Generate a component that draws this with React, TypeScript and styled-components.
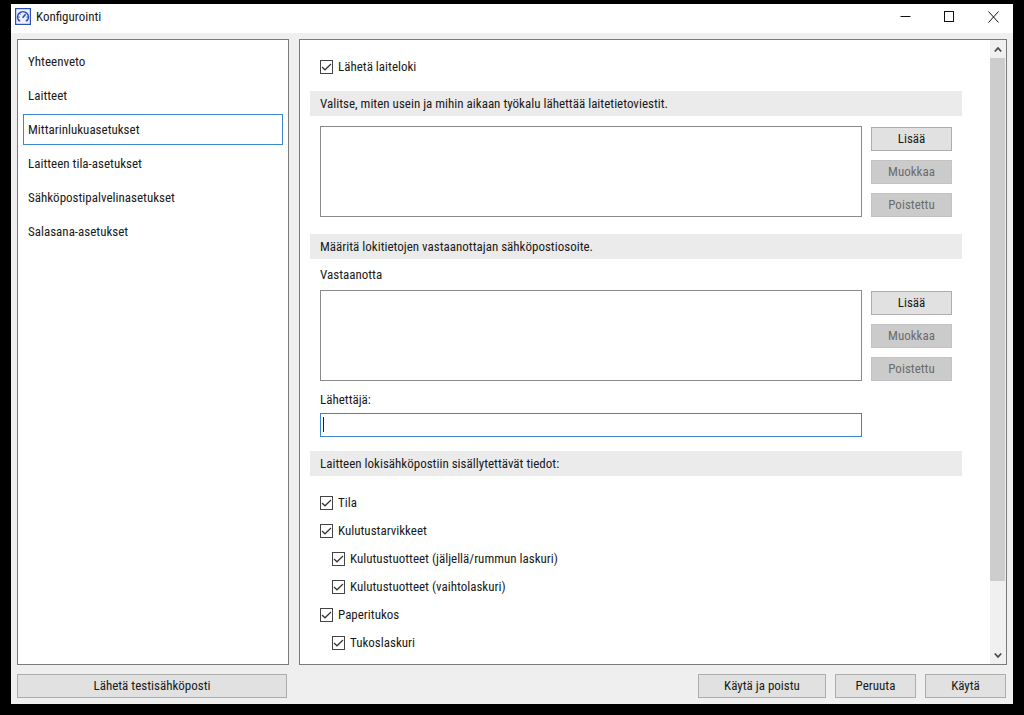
import React from "react";
import styled, { createGlobalStyle } from "styled-components";

const GlobalStyle = createGlobalStyle`
  *, *::before, *::after { box-sizing: border-box; }
  body {
    margin: 0;
    background: #000;
    color: #1a1a1a;
    font: 13px/16px "Roboto Condensed", Roboto, sans-serif;
  }
  button, input, select { font: inherit; color: inherit; margin: 0; }
`;

const Desktop = styled.div`
  display: flex;
  min-height: 100vh;
  padding: 4px 11px 11px;
`;

const Window = styled.main`
  flex: 1;
  display: flex;
  flex-direction: column;
  min-width: 0;
  background: #efefef;
`;

const TitleBar = styled.header`
  display: flex;
  align-items: center;
  gap: 5px;
  height: 29px;
  padding: 0 0 4px 4px;
  background: #fff;
`;

const Title = styled.h1`
  flex: 1;
  margin: 0;
  font-size: 13px;
  font-weight: 400;
`;

const CaptionButton = styled.button`
  display: flex;
  align-items: center;
  justify-content: center;
  width: 39px;
  height: 25px;
  padding: 0;
  border: 0;
  background: none;
`;

const Columns = styled.div`
  flex: 1;
  display: flex;
  gap: 10px;
  padding: 6px 6px 0;
`;

const Sidebar = styled.nav`
  display: flex;
  flex-direction: column;
  gap: 3px;
  width: 272px;
  padding: 6px 5px;
  border: 1px solid #7a7a7a;
  background: #fff;
`;

const NavLink = styled.a<{ $selected?: boolean }>`
  display: flex;
  align-items: center;
  height: 31px;
  padding: 0 4px;
  border: 1px solid ${(p) => (p.$selected ? "#3a87d0" : "transparent")};
  color: inherit;
  text-decoration: none;
`;

const Panel = styled.section`
  flex: 1;
  display: flex;
  min-width: 0;
  border: 1px solid #7a7a7a;
  background: #fff;
`;

const Form = styled.form`
  flex: 1;
  min-width: 0;
  padding: 13px 28px 6px 10px;
`;

const Heading = styled.h2<{ $gap: number }>`
  margin: ${(p) => p.$gap}px 0 0;
  height: 25px;
  padding: 0 10px;
  background: #ebebeb;
  font-size: 13px;
  font-weight: 400;
  line-height: 25px;
`;

const Check = styled.label<{ $nested?: boolean }>`
  display: flex;
  align-items: center;
  gap: 5px;
  height: 28px;
  padding-left: ${(p) => (p.$nested ? 22 : 10)}px;
`;

const Box = styled.input`
  appearance: none;
  width: 13px;
  height: 14px;
  border: 1px solid #444;
  background: #fff;
  &:checked {
    background: #fff url("data:image/svg+xml,%3Csvg xmlns='http://www.w3.org/2000/svg' viewBox='0 0 11 12'%3E%3Cpath d='M1 6 4 8.8 10 3' fill='none' stroke='%23333' stroke-width='1.2'/%3E%3C/svg%3E") center / 11px 12px no-repeat;
  }
`;

const CheckList = styled.div`
  padding-top: 13px;
`;

const ListRow = styled.div<{ $gap?: number }>`
  display: flex;
  gap: 9px;
  margin-top: ${(p) => p.$gap ?? 0}px;
  padding: 0 10px;
`;

const ListBox = styled.select`
  flex: 1;
  min-width: 0;
  height: 91px;
  padding: 0;
  border: 1px solid #8a8a8a;
  border-radius: 0;
  background: #fff;
  outline: 0;
`;

const ButtonColumn = styled.div`
  display: flex;
  flex-direction: column;
  gap: 9px;
  width: 81px;
  padding-top: 1px;
`;

const PushButton = styled.button<{ $width?: number }>`
  width: ${(p) => (p.$width ? `${p.$width}px` : "100%")};
  height: 24px;
  padding: 0;
  border: 1px solid #adadad;
  border-radius: 0;
  background: #e1e1e1;
  &:disabled {
    border-color: #c3c3c3;
    background: #cbcbcb;
    color: #6c6c6c;
  }
`;

const FieldLabel = styled.label`
  display: block;
  height: 31px;
  padding: 0 10px;
  line-height: 31px;
`;

const SenderLabel = styled(FieldLabel)`
  height: 32px;
  line-height: 38px;
`;

const TextField = styled.div`
  position: relative;
  margin: 0 100px 0 10px;
`;

const TextInput = styled.input`
  display: block;
  width: 100%;
  height: 24px;
  padding: 0 3px;
  border: 1px solid #3a87d0;
  border-radius: 0;
  background: #fff;
  outline: 0;
  caret-color: transparent;
`;

const Caret = styled.span`
  position: absolute;
  top: 4px;
  left: 3px;
  width: 1px;
  height: 15px;
  background: #222;
`;

const ScrollBar = styled.div`
  display: flex;
  flex-direction: column;
  width: 16px;
  background: #f0f0f0;
`;

const ScrollButton = styled.button`
  display: flex;
  align-items: center;
  justify-content: center;
  height: 18px;
  padding: 0;
  border: 0;
  background: none;
`;

const Track = styled.div`
  flex: 1;
  margin-right: 1px;
`;

const Thumb = styled.div`
  height: 89%;
  background: #cdcdcd;
`;

const Footer = styled.footer`
  display: flex;
  gap: 9px;
  padding: 9px 7px 6px 6px;
`;

const Spacer = styled.div`
  flex: 1;
`;

const AppIcon = () => (
  <svg width="16" height="17" viewBox="0 0 16 17" fill="none" stroke="#2f4fb8">
    <rect x="0.6" y="0.6" width="14.8" height="15.8" fill="#eef2ff" strokeWidth="1.2" />
    <path d="M5.2 12.6H3.9A5.4 5.4 0 1 1 12.1 12.6H10.8" strokeWidth="1.6" />
    <path d="M7.6 9.8 10.6 6.2" strokeWidth="1.7" />
    <path d="M3 9h1.8M11.4 9h1.6M5 5.6 5.8 6.6" strokeWidth="1" />
  </svg>
);

const Chevron = ({ down }: { down?: boolean }) => (
  <svg width="8" height="7" viewBox="0 0 8 7" fill="none" stroke="#4a4a4a" strokeWidth="1.8">
    <path d={down ? "M0.8 1.5 4 5 7.2 1.5" : "M0.8 5.5 4 2 7.2 5.5"} />
  </svg>
);

const pages = [
  "Yhteenveto",
  "Laitteet",
  "Mittarinlukuasetukset",
  "Laitteen tila-asetukset",
  "Sähköpostipalvelinasetukset",
  "Salasana-asetukset",
];

const contents = [
  { label: "Tila" },
  { label: "Kulutustarvikkeet" },
  { label: "Kulutustuotteet (jäljellä/rummun laskuri)", nested: true },
  { label: "Kulutustuotteet (vaihtolaskuri)", nested: true },
  { label: "Paperitukos" },
  { label: "Tukoslaskuri", nested: true },
];

const CheckItem = ({ label, nested }: { label: string; nested?: boolean }) => (
  <Check $nested={nested}>
    <Box type="checkbox" defaultChecked />
    {label}
  </Check>
);

const ListButtons = () => (
  <ButtonColumn>
    <PushButton type="button">Lisää</PushButton>
    <PushButton type="button" disabled>Muokkaa</PushButton>
    <PushButton type="button" disabled>Poistettu</PushButton>
  </ButtonColumn>
);

export default function App() {
  return (
    <>
      <GlobalStyle />
      <Desktop>
        <Window>
          <TitleBar>
            <AppIcon />
            <Title>Konfigurointi</Title>
            <CaptionButton aria-label="Pienennä">
              <svg width="11" height="11" viewBox="0 0 11 11" stroke="#111">
                <path d="M0.5 5.5h10" />
              </svg>
            </CaptionButton>
            <CaptionButton aria-label="Suurenna">
              <svg width="11" height="11" viewBox="0 0 11 11" fill="none" stroke="#111">
                <rect x="0.5" y="0.5" width="9" height="10" />
              </svg>
            </CaptionButton>
            <CaptionButton aria-label="Sulje">
              <svg width="11" height="12" viewBox="0 0 11 12" stroke="#111">
                <path d="M0.5 0.5 10.5 11.5M10.5 0.5 0.5 11.5" />
              </svg>
            </CaptionButton>
          </TitleBar>
          <Columns>
            <Sidebar>
              {pages.map((page, i) => (
                <NavLink key={page} href="#" $selected={i === 2}>{page}</NavLink>
              ))}
            </Sidebar>
            <Panel>
              <Form>
                <CheckItem label="Lähetä laiteloki" />
                <Heading $gap={10}>Valitse, miten usein ja mihin aikaan työkalu lähettää laitetietoviestit.</Heading>
                <ListRow $gap={10}>
                  <ListBox multiple aria-label="Lähetysajat" />
                  <ListButtons />
                </ListRow>
                <Heading $gap={17}>Määritä lokitietojen vastaanottajan sähköpostiosoite.</Heading>
                <FieldLabel htmlFor="recipients">Vastaanotta</FieldLabel>
                <ListRow>
                  <ListBox multiple id="recipients" />
                  <ListButtons />
                </ListRow>
                <SenderLabel htmlFor="sender">Lähettäjä:</SenderLabel>
                <TextField>
                  <TextInput id="sender" type="text" />
                  <Caret />
                </TextField>
                <Heading $gap={14}>Laitteen lokisähköpostiin sisällytettävät tiedot:</Heading>
                <CheckList>
                  {contents.map((c) => (
                    <CheckItem key={c.label} {...c} />
                  ))}
                </CheckList>
              </Form>
              <ScrollBar>
                <ScrollButton type="button" aria-label="Vieritä ylös"><Chevron /></ScrollButton>
                <Track><Thumb /></Track>
                <ScrollButton type="button" aria-label="Vieritä alas"><Chevron down /></ScrollButton>
              </ScrollBar>
            </Panel>
          </Columns>
          <Footer>
            <PushButton type="button" $width={270}>Lähetä testisähköposti</PushButton>
            <Spacer />
            <PushButton type="button" $width={128}>Käytä ja poistu</PushButton>
            <PushButton type="button" $width={81}>Peruuta</PushButton>
            <PushButton type="button" $width={81}>Käytä</PushButton>
          </Footer>
        </Window>
      </Desktop>
    </>
  );
}
